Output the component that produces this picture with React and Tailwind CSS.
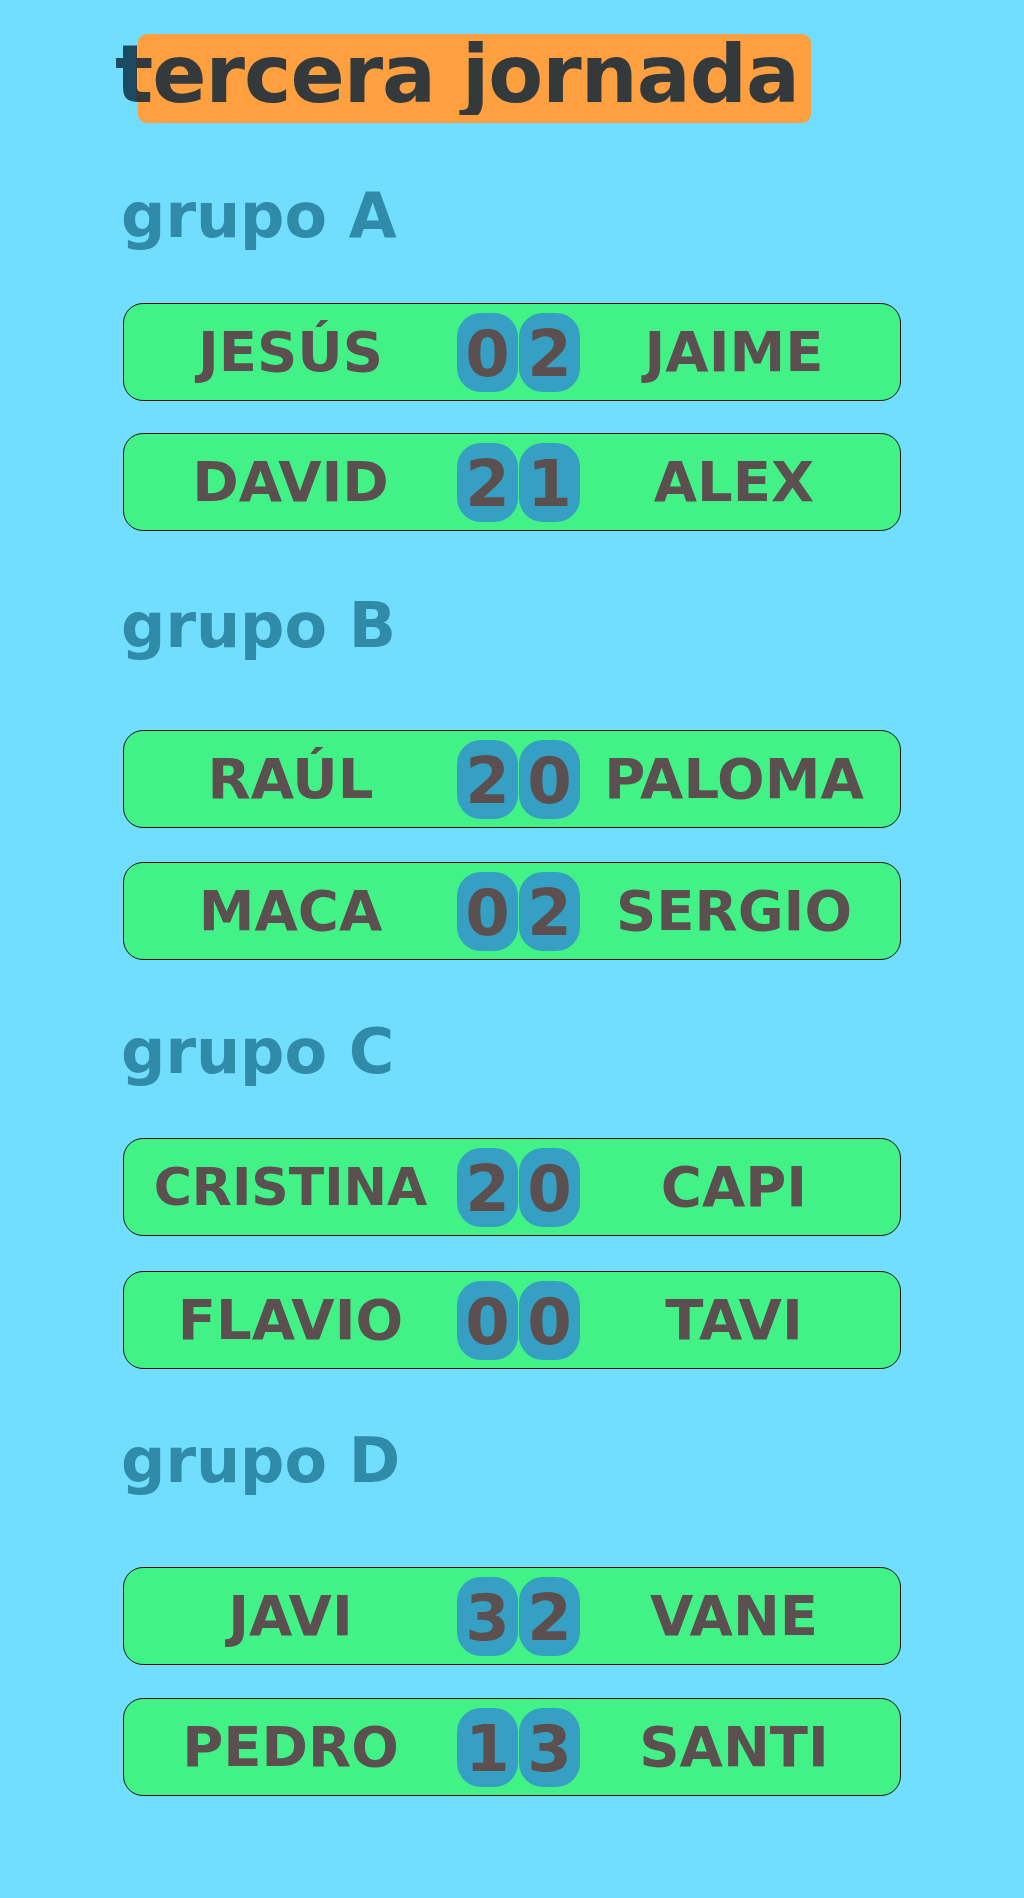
const groups = [
  {
    name: 'grupo A',
    top: 'mt-[62px]',
    gap: 'mt-[56px]',
    between: 'gap-[32px]',
    matches: [
      ['JESÚS', 0, 2, 'JAIME'],
      ['DAVID', 2, 1, 'ALEX'],
    ],
  },
  {
    name: 'grupo B',
    top: 'mt-[64px]',
    gap: 'mt-[73px]',
    between: 'gap-[34px]',
    matches: [
      ['RAÚL', 2, 0, 'PALOMA'],
      ['MACA', 0, 2, 'SERGIO'],
    ],
  },
  {
    name: 'grupo C',
    top: 'mt-[61px]',
    gap: 'mt-[55px]',
    between: 'gap-[35px]',
    matches: [
      ['CRISTINA', 2, 0, 'CAPI'],
      ['FLAVIO', 0, 0, 'TAVI'],
    ],
  },
  {
    name: 'grupo D',
    top: 'mt-[61px]',
    gap: 'mt-[75px]',
    between: 'gap-[33px]',
    matches: [
      ['JAVI', 3, 2, 'VANE'],
      ['PEDRO', 1, 3, 'SANTI'],
    ],
  },
];

function Name({ children }) {
  const size = children.length > 7 ? 'text-[52px]' : 'text-[56px]';
  return <span className={`${size} leading-none font-bold`}>{children}</span>;
}

function Score({ value }) {
  return (
    <div className="w-[61px] h-[79px] pt-[3px] rounded-[24px] bg-[#35a0c3] flex items-center justify-center text-[64px] leading-none font-bold">
      {value}
    </div>
  );
}

function Match({ home, a, b, away }) {
  return (
    <div className="w-[778px] h-[98px] flex items-center bg-[#43f286] border-[1.5px] border-[#111] rounded-[20px] text-[#5c4f50]">
      <div className="w-[333px] text-center">
        <Name>{home}</Name>
      </div>
      <div className="flex gap-[1px]">
        <Score value={a} />
        <Score value={b} />
      </div>
      <div className="flex-1 pr-[12px] text-center">
        <Name>{away}</Name>
      </div>
    </div>
  );
}

export default function App() {
  return (
    <div className="min-h-[1898px] w-[1024px] bg-[#71ddff] pt-[34px] pl-[123px] font-['DejaVu_Sans',sans-serif]">
      <div className="ml-[15px] w-[673px] h-[89px] rounded-[9px] bg-[#ffa040] pt-[1px]">
        <h1 className="-ml-[23px] text-[80px] leading-none font-bold tracking-[-1px] bg-[linear-gradient(to_right,#1c4a60_21px,#34393b_21px)] bg-clip-text text-transparent w-max">
          tercera jornada
        </h1>
      </div>

      {groups.map((g) => (
        <section key={g.name}>
          <h2 className={`${g.top} -ml-[2px] text-[62px] leading-none font-bold text-[#2f8ba8]`}>{g.name}</h2>
          <div className={`${g.gap} flex flex-col ${g.between}`}>
            {g.matches.map(([home, a, b, away]) => (
              <Match key={home} home={home} a={a} b={b} away={away} />
            ))}
          </div>
        </section>
      ))}
    </div>
  );
}
